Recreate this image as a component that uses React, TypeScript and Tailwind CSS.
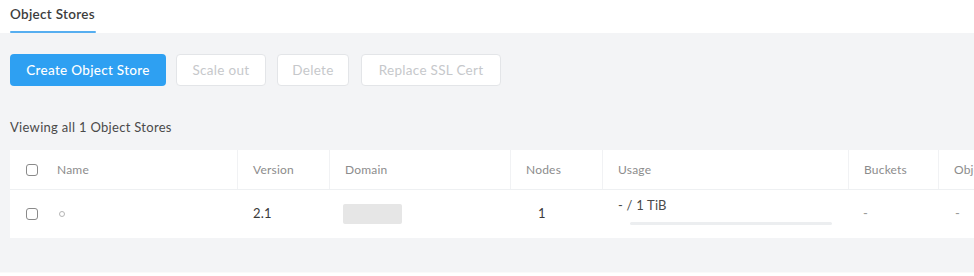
import React from 'react';

const columns = [
  { key: 'name', label: 'Name', w: 'w-[227px]' },
  { key: 'version', label: 'Version', w: 'w-[92px]' },
  { key: 'domain', label: 'Domain', w: 'w-[181px]' },
  { key: 'nodes', label: 'Nodes', w: 'w-[92px]' },
  { key: 'usage', label: 'Usage', w: 'w-[246px]' },
  { key: 'buckets', label: 'Buckets', w: 'w-[90px]' },
  { key: 'objects', label: 'Objects', w: 'w-[120px]' },
];

const Checkbox: React.FC = () => (
  <span className="inline-block w-[12px] h-[12px] rounded-[3px] border border-[#8a8a8a] bg-white" />
);

const App: React.FC = () => {
  return (
    <div className="w-[974px] h-[276px] overflow-hidden bg-white font-['Lato',sans-serif]">
      <div className="h-[33px] px-[10px] flex items-end bg-white">
        <div className="h-[33px] flex flex-col justify-between pt-[4px]">
          <span className="text-[13.5px] font-semibold text-[#3d3d3d] tracking-[0.3px]">Object Stores</span>
          <span className="block h-[2px] w-[86px] bg-[#56aef0] rounded-full" />
        </div>
      </div>

      <div className="h-[240px] bg-[#f3f4f6] pl-[10px] pt-[21px] border-b border-[#fafafa]">
        <div className="flex items-center text-[13.5px] tracking-[0.3px]">
          <button className="h-[32px] w-[156px] rounded-[4px] bg-[#2ea0f2] text-white font-medium">
            Create Object Store
          </button>
          <button className="ml-[10px] h-[32px] w-[90px] rounded-[4px] bg-white border border-[#e3e5e8] text-[#c6c8cb]">
            Scale out
          </button>
          <button className="ml-[11px] h-[32px] w-[72px] rounded-[4px] bg-white border border-[#e3e5e8] text-[#c6c8cb]">
            Delete
          </button>
          <button className="ml-[12px] h-[32px] w-[140px] rounded-[4px] bg-white border border-[#e3e5e8] text-[#c6c8cb]">
            Replace SSL Cert
          </button>
        </div>

        <div className="mt-[33px] text-[13px] tracking-[0.3px] text-[#4a4a4a] leading-[16px]">Viewing all 1 Object Stores</div>

        <div className="mt-[15px] bg-white w-[1060px] text-[12px] tracking-[0.2px]">
          <div className="h-[40px] flex border-b border-[#eef0f2]">
            {columns.map((c, i) => (
              <div
                key={c.key}
                className={`${c.w} shrink-0 flex items-center text-[#8c8c8c] whitespace-nowrap ${i > 0 ? 'border-l border-[#f1f2f4] pl-[15px]' : 'pl-[16px]'}`}
              >
                {i === 0 && (
                  <span className="mr-[19px] flex">
                    <Checkbox />
                  </span>
                )}
                {c.label}
              </div>
            ))}
          </div>
          <div className="h-[48px] flex text-[13px] text-[#3a3a3a]">
            <div className="w-[227px] shrink-0 flex items-center pl-[16px]">
              <span className="mr-[21px] flex">
                <Checkbox />
              </span>
              <span className="inline-block w-[6px] h-[6px] rounded-full border border-[#b5b5b5]" />
            </div>
            <div className="w-[92px] shrink-0 flex items-center pl-[16px]">2.1</div>
            <div className="w-[181px] shrink-0 flex items-center pl-[14px]">
              <span className="block w-[59px] h-[20px] bg-[#e6e6e6] rounded-[2px]" />
            </div>
            <div className="w-[92px] shrink-0 flex items-center pl-[28px]">1</div>
            <div className="w-[246px] shrink-0 flex flex-col justify-center pl-[16px]">
              <span className="leading-[14px] text-[#4a4a4a] -mt-[6px]">- / 1 TiB</span>
              <span className="block mt-[10px] ml-[12px] h-[3px] w-[202px] bg-[#eceef0] rounded-full" />
            </div>
            <div className="w-[90px] shrink-0 flex items-center pl-[15px] text-[#9a9a9a]">-</div>
            <div className="w-[120px] shrink-0 flex items-center pl-[17px] text-[#9a9a9a]">-</div>
          </div>
        </div>
      </div>
    </div>
  );
};

export default App;
